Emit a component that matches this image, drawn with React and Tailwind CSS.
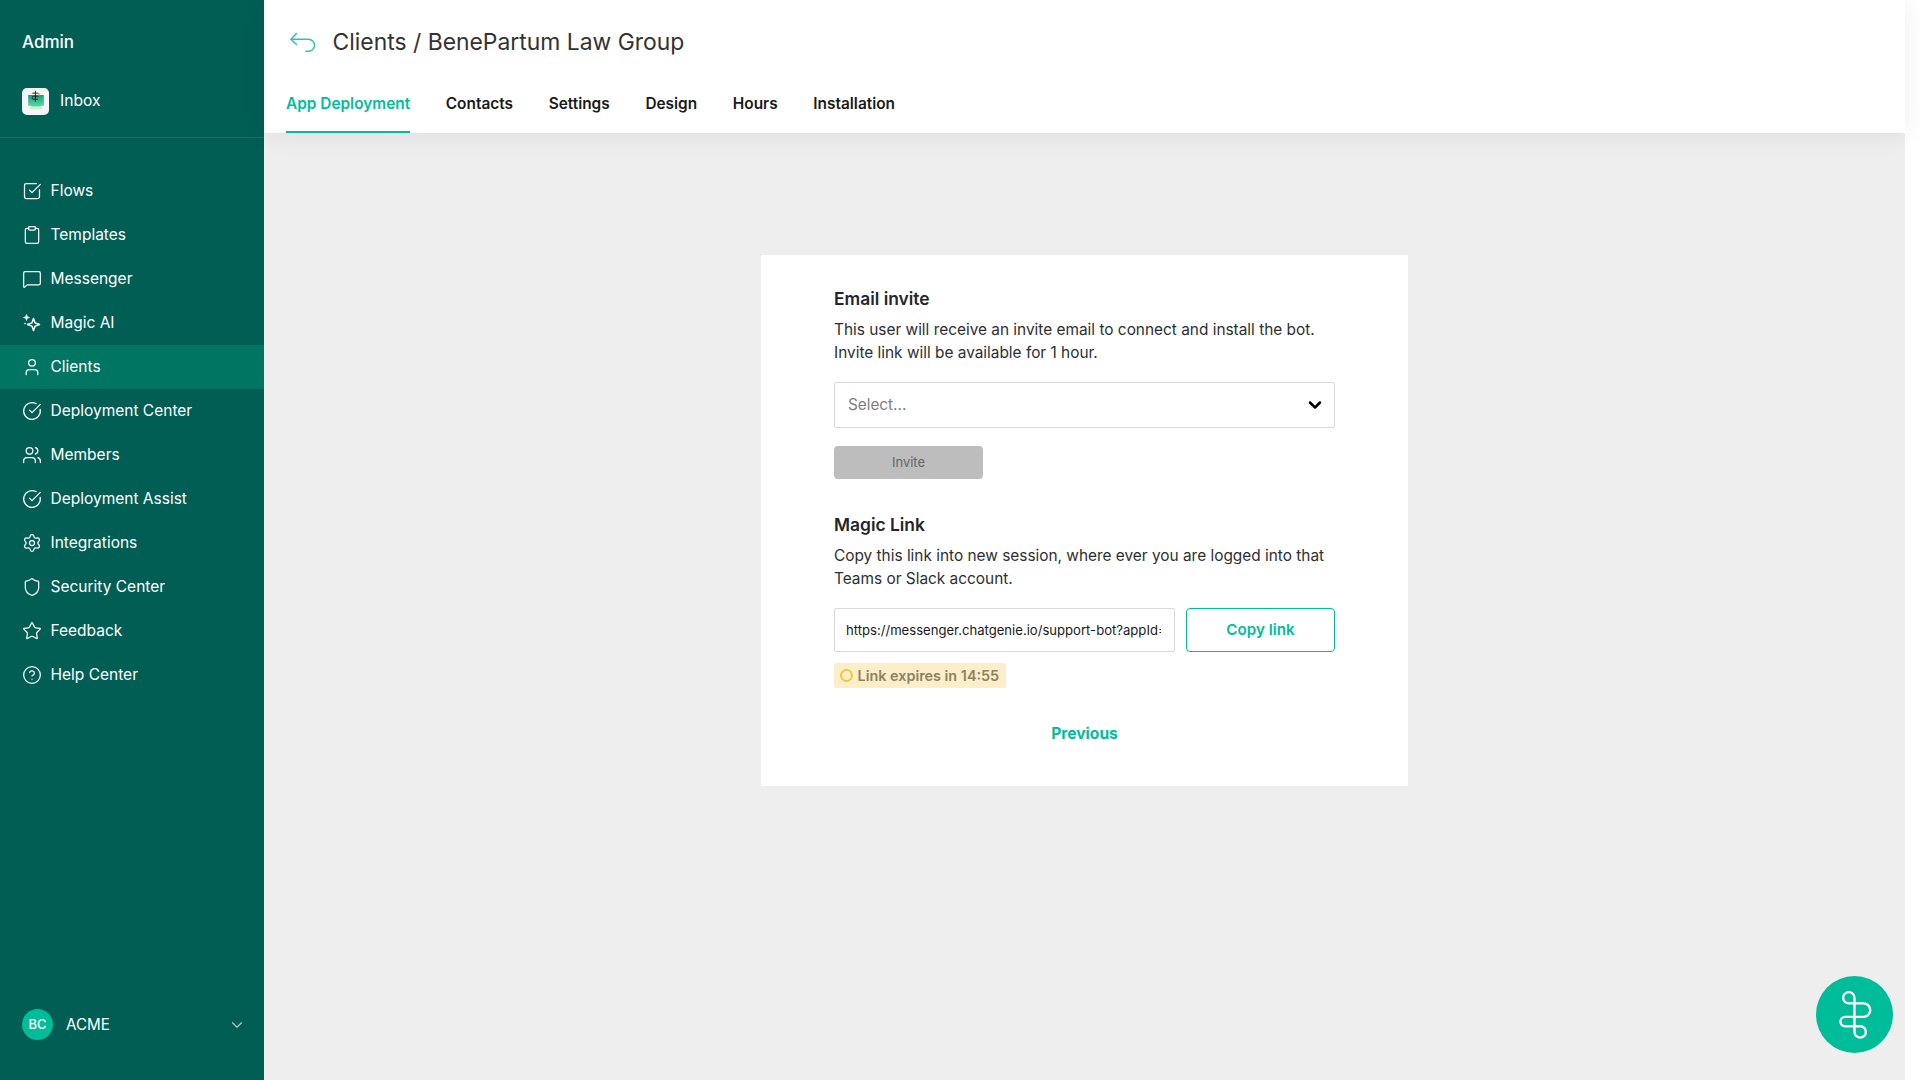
import React from "react";
import { SquareCheckBig, Clipboard, MessageSquare, User, CircleCheckBig, Users, Settings, Shield, Star, CircleHelp, ChevronDown } from "lucide-react";

const Spark = (p) => (
  <svg viewBox="0 0 20 20" fill="none" stroke="currentColor" strokeWidth="1.5" strokeLinejoin="round" {...p}>
    <path d="M11.5 5.5l1.6 4.4 4.4 1.6-4.4 1.6-1.6 4.4-1.6-4.4-4.4-1.6 4.4-1.6z" />
    <path d="M4.5 1.5l.8 2.2 2.2.8-2.2.8-.8 2.2-.8-2.2-2.2-.8 2.2-.8z" fill="currentColor" strokeWidth="0.6" />
    <circle cx="3" cy="10.5" r="0.6" fill="currentColor" strokeWidth="0.5" />
  </svg>
);

const nav = [
  ["Flows", SquareCheckBig],
  ["Templates", Clipboard],
  ["Messenger", MessageSquare],
  ["Magic AI", Spark],
  ["Clients", User, true],
  ["Deployment Center", CircleCheckBig],
  ["Members", Users],
  ["Deployment Assist", CircleCheckBig],
  ["Integrations", Settings],
  ["Security Center", Shield],
  ["Feedback", Star],
  ["Help Center", CircleHelp],
];

const tabs = ["Contacts", "Settings", "Design", "Hours", "Installation"];

function Sidebar() {
  return (
    <aside className="flex h-full w-[264px] shrink-0 flex-col bg-[#015e55] text-white">
      <div className="h-[138px] border-b border-[#0f7568] pl-[22px]">
        <div className="pt-[30px] text-[17px] leading-[24px] font-medium">Admin</div>
        <div className="mt-[33px] flex h-[28px] items-center gap-[11px]">
          <div className="flex size-[27px] items-center justify-center rounded-[5px] bg-[#f4f7f5]">
            <svg viewBox="0 0 20 20" className="size-[24px]">
              <defs>
                <linearGradient id="inboxGrad" x1="0" y1="0" x2="0" y2="1">
                  <stop offset="0" stopColor="#0f9f88" />
                  <stop offset="1" stopColor="#6fe3a0" />
                </linearGradient>
              </defs>
              <path d="M3.5 5h13v9h-2.5v2.5H6V14H3.5z" fill="url(#inboxGrad)" />
              <path d="M5 14.5h10v2.5H5z" fill="#cfeede" />
              <path d="M9.5 1.5v9M7 3.5h4.5a1.2 1.2 0 010 2.5H8a1.2 1.2 0 000 2.5h3.5" fill="none" stroke="#222" strokeWidth="0.8" />
              <circle cx="12.5" cy="4.5" r="1" fill="#f2c94c" />
            </svg>
          </div>
          <span className="text-[15.6px] leading-[24px]">Inbox</span>
        </div>
      </div>
      <nav className="mt-[31px] flex flex-col">
        {nav.map(([label, Icon, active]) => (
          <div key={label} className={`flex h-[44px] items-center gap-[8.5px] pl-[22px] ${active ? "bg-[#007561]" : ""}`}>
            <Icon className="size-[20px] shrink-0" strokeWidth={1.5} />
            <span className="text-[15.5px] leading-[24px]">{label}</span>
          </div>
        ))}
      </nav>
      <div className="mt-auto mb-[40px] flex items-center pr-[18px] pl-[22px]">
        <div className="flex size-[31px] items-center justify-center rounded-full bg-[#00bd9a] text-[13px] font-medium">BC</div>
        <span className="ml-[13px] text-[15.2px] leading-[24px]">ACME</span>
        <ChevronDown className="ml-auto size-[18px] text-[#b9c9c6]" strokeWidth={1.5} />
      </div>
    </aside>
  );
}

function Header() {
  return (
    <header className="relative z-10 h-[133px] shrink-0 bg-white pl-[22px] shadow-[0_2px_24px_rgba(0,0,0,0.07)]">
      <div className="flex h-[84px] items-center">
        <svg viewBox="0 0 27 21" fill="none" stroke="#2cc5a5" strokeWidth="1.4" strokeLinecap="round" strokeLinejoin="round" className="ml-[4px] h-[21px] w-[27px]">
          <path d="M6.5 1.5L1 7.3l5.5 5.2" />
          <path d="M1 7.3h17.5a6 6 0 010 12H16" />
        </svg>
        <h1 className="ml-[15.5px] text-[22.9px] leading-[32px] font-normal text-[#333333]">Clients / BenePartum Law Group</h1>
      </div>
      <div className="-mt-[2px] flex h-[51px] gap-[35.7px] text-[15.4px] font-semibold">
        <div className="flex h-full items-center border-b-2 border-[#00bd9a] pb-[5px] text-[#00bd9a]">App Deployment</div>
        {tabs.map((t) => (
          <div key={t} className="flex h-full items-center border-b-2 border-transparent pb-[5px] text-[#1a1a1a]">{t}</div>
        ))}
      </div>
    </header>
  );
}

function Card() {
  return (
    <section className="w-[647px] bg-white px-[73px] pt-[32px] pb-[40px]">
      <h2 className="text-[17.4px] leading-[24px] font-semibold text-[#23262b]">Email invite</h2>
      <p className="mt-[7px] text-[15.4px] leading-[23px] text-[#2c2f33]">
        This user will receive an invite email to connect and install the bot.<br />Invite link will be available for 1 hour.
      </p>
      <div className="mt-[18px] flex h-[46px] items-center justify-between rounded-[2px] border border-[#d9d9d9] pr-[9px] pl-[13px]">
        <span className="text-[15.3px] text-[#808080]">Select...</span>
        <ChevronDown className="size-[20px] text-black" strokeWidth={3} />
      </div>
      <button className="mt-[18px] block h-[33px] w-[149px] rounded-[4px] bg-[#bdbdbd] text-[13px] text-[#666666]">Invite</button>
      <h2 className="mt-[34px] text-[17.4px] leading-[24px] font-semibold text-[#23262b]">Magic Link</h2>
      <p className="mt-[7px] text-[15.4px] leading-[23px] text-[#2c2f33]">
        Copy this link into new session, where ever you are logged into that<br />Teams or Slack account.
      </p>
      <div className="mt-[18px] flex gap-[11px]">
        <div className="flex h-[44px] w-[341px] items-center rounded-[2px] border border-[#d9d9d9] pr-[13px] pl-[11px] text-[13.1px] text-[#1a1a1a]">
          <span className="block w-full truncate pt-[1px] [text-overflow:clip]">https://messenger.chatgenie.io/support-bot?appId=</span>
        </div>
        <button className="h-[44px] flex-1 rounded-[4px] border-[1.5px] border-[#00bd9a] text-[15.2px] font-semibold text-[#00bd9a]">Copy link</button>
      </div>
      <div className="mt-[11px] flex h-[25px] w-[172px] items-center gap-[4.5px] rounded-[2px] bg-[#fbeec8] pl-[6px] text-[14.4px] font-semibold text-[#8c8261]">
        <span className="size-[13px] rounded-full border-2 border-[#f3c63f]" />
        Link expires in 14:55
      </div>
      <div className="mt-[34px] text-center text-[15.6px] leading-[24px] font-bold text-[#00bd9a]">Previous</div>
    </section>
  );
}

export default function App() {
  return (
    <div className="h-screen w-full overflow-hidden bg-white font-['Inter',sans-serif]">
      <div className="relative flex h-full w-[1905px]">
        <Sidebar />
        <main className="flex h-full min-w-0 flex-1 flex-col bg-[#eeeeee]">
          <Header />
          <div className="flex flex-1 items-start justify-center pt-[122px]">
            <Card />
          </div>
        </main>
        <button className="absolute right-[12px] bottom-[27px] flex size-[77px] items-center justify-center rounded-full bg-[#00bd9a]">
          <svg viewBox="48 48 230 230" fill="none" stroke="white" strokeWidth="7" className="size-[77px]">
            <path d="M163 113A17 17 0 1 0 146 130L190 130A20 20 0 0 1 190 170L135 170A14 14 0 0 0 135 198L180 198A17 17 0 1 1 163 215Z" />
          </svg>
        </button>
      </div>
    </div>
  );
}
